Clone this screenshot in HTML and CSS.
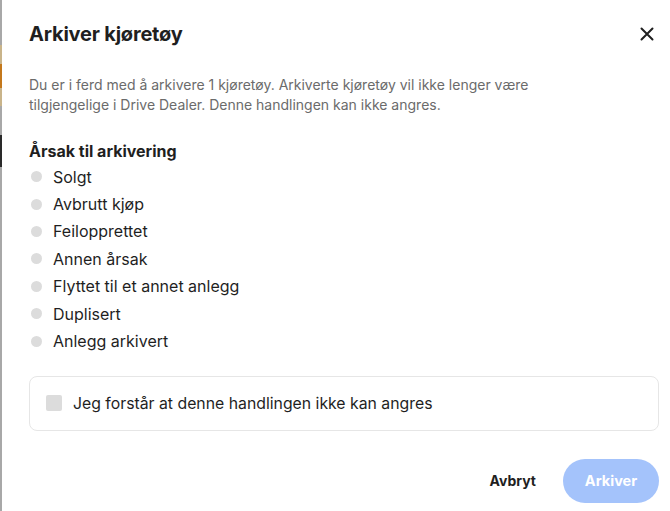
FILE: index.html
```html
<!DOCTYPE html>
<html lang="no">
<head>
    <meta charset="UTF-8">
    <meta name="viewport" content="width=device-width, initial-scale=1.0">
    <title>Arkiver kjøretøy</title>
    <link rel="stylesheet" href="styles.css">
</head>
<body>
    <div class="page-edge"></div>

    <div class="modal">
        <div class="modal-header">
            <h1>Arkiver kjøretøy</h1>
            <button class="close-button" type="button" aria-label="Lukk">
                <svg width="14" height="14" viewBox="0 0 14 14">
                    <path d="M1.5 1.5 L12.5 12.5 M12.5 1.5 L1.5 12.5" stroke="#1f1f1f" stroke-width="2" stroke-linecap="round"/>
                </svg>
            </button>
        </div>

        <p class="intro">Du er i ferd med å arkivere 1 kjøretøy. Arkiverte kjøretøy vil ikke lenger være tilgjengelige i Drive Dealer. Denne handlingen kan ikke angres.</p>

        <fieldset class="reasons">
            <legend>Årsak til arkivering</legend>
            <label class="reason"><span class="radio"></span>Solgt</label>
            <label class="reason"><span class="radio"></span>Avbrutt kjøp</label>
            <label class="reason"><span class="radio"></span>Feilopprettet</label>
            <label class="reason"><span class="radio"></span>Annen årsak</label>
            <label class="reason"><span class="radio"></span>Flyttet til et annet anlegg</label>
            <label class="reason"><span class="radio"></span>Duplisert</label>
            <label class="reason"><span class="radio"></span>Anlegg arkivert</label>
        </fieldset>

        <label class="confirm-card">
            <span class="checkbox"></span>
            Jeg forstår at denne handlingen ikke kan angres
        </label>

        <div class="modal-footer">
            <button class="cancel-button" type="button">Avbryt</button>
            <button class="archive-button" type="button" disabled>Arkiver</button>
        </div>
    </div>
</body>
</html>
```

FILE: styles.css
```css
/* 全局 */
body {
    margin: 0;
    font-family: Inter, "Noto Sans", sans-serif;
    color: #1f1f1f;
    background: #fff;
    display: flex;
    min-height: 100vh;
}

/* 弹窗后面露出的页面边缘 */
.page-edge {
    width: 2px;
    flex-shrink: 0;
    background: linear-gradient(
        to bottom,
        #a8a8a8 0px, #a8a8a8 45px,
        #c9b48a 45px, #c9b48a 64px,
        #c4781c 64px, #c4781c 88px,
        #c9b48a 88px, #c9b48a 106px,
        #a8a8a8 106px, #a8a8a8 135px,
        #2a2a2a 135px, #2a2a2a 167px,
        #a8a8a8 167px
    );
}

.modal {
    flex: 1;
    padding: 20px 11px 0 27px;
    box-sizing: border-box;
}

/* 标题栏 */
.modal-header {
    display: flex;
    justify-content: space-between;
    align-items: center;
}

.modal-header h1 {
    margin: 0;
    font-size: 20px;
    line-height: 28px;
    font-weight: 700;
    letter-spacing: -0.2px;
}

.close-button {
    border: none;
    background: none;
    padding: 0;
    margin-right: 5px;
    width: 14px;
    height: 14px;
    display: flex;
    cursor: pointer;
}

.intro {
    margin: 27px 0 0 0;
    font-size: 14px;
    line-height: 20px;
    color: #6b6b6b;
    max-width: 560px;
}

/* 原因单选列表 */
.reasons {
    border: none;
    margin: 25px 0 0 0;
    padding: 0;
    display: flex;
    flex-direction: column;
}

.reasons legend {
    padding: 0;
    font-size: 16px;
    font-weight: 700;
    line-height: 22px;
    margin-bottom: 1px;
}

.reason {
    display: flex;
    align-items: center;
    gap: 11px;
    height: 27.4px;
    font-size: 16px;
    cursor: pointer;
}

.radio {
    width: 11px;
    height: 11px;
    border-radius: 50%;
    background: #dcdcdc;
    margin-left: 2px;
}

/* 确认卡片 */
.confirm-card {
    margin-top: 21px;
    height: 55px;
    box-sizing: border-box;
    border: 1px solid #e6e6e6;
    border-radius: 8px;
    display: flex;
    align-items: center;
    gap: 11px;
    padding-left: 16px;
    font-size: 15.8px;
    cursor: pointer;
}

.checkbox {
    width: 16px;
    height: 16px;
    border-radius: 2px;
    background: #dcdcdc;
}

/* 底部按钮 */
.modal-footer {
    display: flex;
    justify-content: flex-end;
    align-items: center;
    gap: 27px;
    margin-top: 28px;
}

.cancel-button {
    border: none;
    background: none;
    padding: 0;
    font-family: inherit;
    font-size: 14px;
    font-weight: 700;
    color: #1f1f1f;
    cursor: pointer;
}

.archive-button {
    width: 96px;
    height: 44px;
    border: none;
    border-radius: 22px;
    background: #a4c3fb;
    color: #fff;
    font-family: inherit;
    font-size: 14.5px;
    font-weight: 700;
}
```
